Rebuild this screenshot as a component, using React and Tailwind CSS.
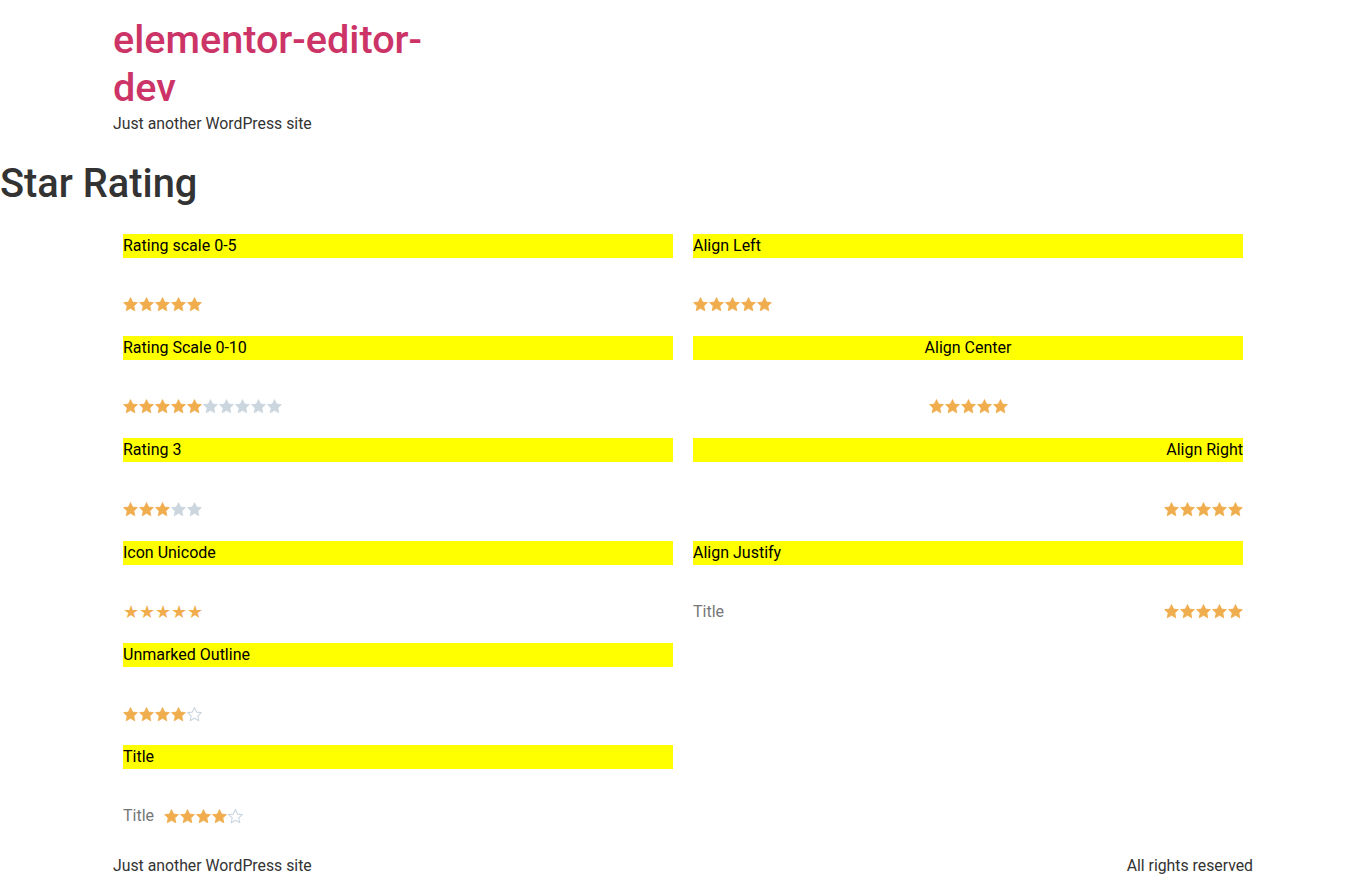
import React from 'react'

const FULL = '#f0ad4e'
const EMPTY = '#ccd6df'

function Star({ fill = 'full', outline = false }) {
  const pts = '7.5,0.6 9.6,5.1 14.4,5.6 10.8,8.9 11.8,13.8 7.5,11.3 3.2,13.8 4.2,8.9 0.6,5.6 5.4,5.1'
  if (outline && fill === 'empty') {
    return (
      <svg width="15" height="15" viewBox="0 0 15 15" className="block">
        <polygon points={pts} fill="none" stroke={EMPTY} strokeWidth="1.1" strokeLinejoin="round" />
      </svg>
    )
  }
  return (
    <svg width="15" height="15" viewBox="0 0 15 15" className="block">
      <polygon points={pts} fill={fill === 'full' ? FULL : EMPTY} stroke={fill === 'full' ? FULL : EMPTY} strokeWidth="0.8" strokeLinejoin="round" />
    </svg>
  )
}

function Stars({ count = 5, rating = 5, outline = false }) {
  return (
    <div className="flex gap-[1px]">
      {Array.from({ length: count }).map((_, i) => (
        <Star key={i} fill={i < rating ? 'full' : 'empty'} outline={outline} />
      ))}
    </div>
  )
}

function UnicodeStars() {
  return (
    <div className="flex text-[18px] leading-4 text-[#f0ad4e] font-['DejaVu_Sans',sans-serif]">
      {Array.from({ length: 5 }).map((_, i) => (
        <span key={i} className="w-4 block">★</span>
      ))}
    </div>
  )
}

function Block({ title, align = 'left', children }) {
  const textAlign = align === 'center' ? 'text-center' : align === 'right' ? 'text-right' : 'text-left'
  const justify = align === 'center' ? 'justify-center' : align === 'right' ? 'justify-end' : align === 'justify' ? 'justify-between' : 'justify-start'
  return (
    <div className="h-[102.4px]">
      <h2 className={`bg-[#ffff00] h-6 leading-6 text-base text-black ${textAlign}`}>{title}</h2>
      <div className={`mt-[39px] h-4 flex items-center ${justify}`}>{children}</div>
    </div>
  )
}

export default function App() {
  return (
    <div className="min-h-[894px] bg-white text-[#333] font-['Roboto',sans-serif]">
      <header className="w-[1140px] mx-auto pt-4 pb-4">
        <div className="w-[330px] text-[39.6px] leading-[48px] text-[#cc3366] font-medium">elementor-editor-dev</div>
        <p className="text-[15.8px] leading-6 text-[#333]">Just another WordPress site</p>
      </header>

      <h1 className="text-[39.8px] leading-[48px] mt-[7.5px] text-[#333] font-medium">Star Rating</h1>

      <div className="w-[1140px] mx-auto mt-[26px] grid grid-cols-2">
        <div className="px-[10px]">
          <Block title="Rating scale 0-5"><Stars /></Block>
          <Block title="Rating Scale 0-10"><Stars count={10} rating={5} /></Block>
          <Block title="Rating 3"><Stars rating={3} /></Block>
          <Block title="Icon Unicode"><UnicodeStars /></Block>
          <Block title="Unmarked Outline"><Stars rating={4} outline /></Block>
          <Block title="Title">
            <span className="text-base text-[#777] mr-[10px]">Title</span>
            <Stars rating={4} outline />
          </Block>
        </div>
        <div className="px-[10px]">
          <Block title="Align Left"><Stars /></Block>
          <Block title="Align Center" align="center"><Stars /></Block>
          <Block title="Align Right" align="right"><Stars /></Block>
          <Block title="Align Justify" align="justify">
            <span className="text-base text-[#777]">Title</span>
            <Stars />
          </Block>
        </div>
      </div>

      <footer className="w-[1140px] mx-auto flex justify-between text-[15.8px] leading-6 text-[#333] mt-[6px]">
        <p>Just another WordPress site</p>
        <p>All rights reserved</p>
      </footer>
    </div>
  )
}
